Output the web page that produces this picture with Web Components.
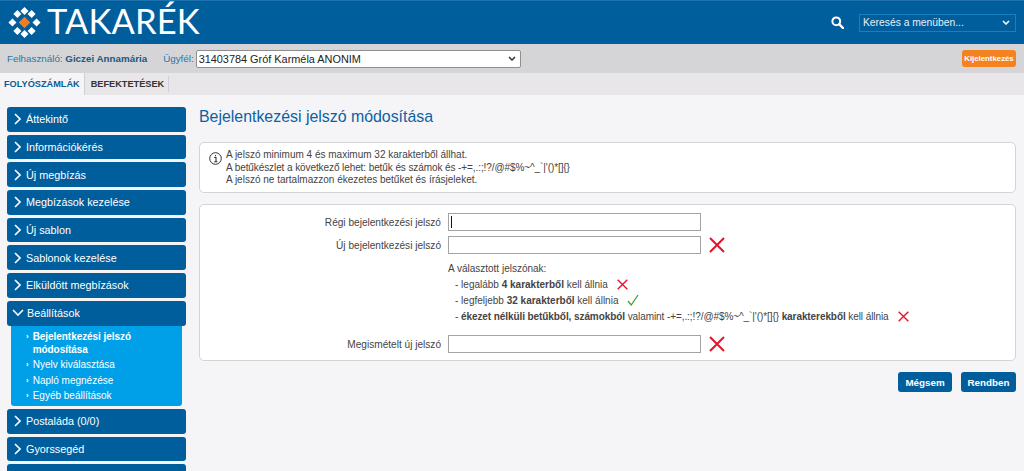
<!DOCTYPE html>
<html lang="hu">
<head>
<meta charset="utf-8">
<title>Takarék</title>
<style>
    html, body { margin: 0; height: 471px; overflow: hidden; }
    body { background: #f5f5f7; font-family: "Liberation Sans", Arial, sans-serif; font-size: 10px; color: #444; }
</style>
</head>
<body>
<tk-header></tk-header>
<tk-userbar name="Giczei Annamária" client="31403784 Gróf Karméla ANONIM"></tk-userbar>
<tk-tabs></tk-tabs>
<tk-layout>
    <tk-nav slot="nav">
        <tk-nav-item>Áttekintő</tk-nav-item>
        <tk-nav-item>Információkérés</tk-nav-item>
        <tk-nav-item>Új megbízás</tk-nav-item>
        <tk-nav-item>Megbízások kezelése</tk-nav-item>
        <tk-nav-item>Új sablon</tk-nav-item>
        <tk-nav-item>Sablonok kezelése</tk-nav-item>
        <tk-nav-item>Elküldött megbízások</tk-nav-item>
        <tk-nav-item open>
            Beállítások
            <tk-sub-item slot="sub" active>Bejelentkezési jelszó módosítása</tk-sub-item>
            <tk-sub-item slot="sub">Nyelv kiválasztása</tk-sub-item>
            <tk-sub-item slot="sub">Napló megnézése</tk-sub-item>
            <tk-sub-item slot="sub">Egyéb beállítások</tk-sub-item>
        </tk-nav-item>
        <tk-nav-item>Postaláda (0/0)</tk-nav-item>
        <tk-nav-item>Gyorssegéd</tk-nav-item>
        <tk-nav-item></tk-nav-item>
    </tk-nav>
    <tk-password-page></tk-password-page>
</tk-layout>

<script>
const ICONS = {
    cross: size => `<svg width="${size}" height="${size}" viewBox="0 0 16 16"><path d="M1 1L15 15M15 1L1 15" stroke="#e3132b" stroke-width="2" fill="none"/></svg>`,
    check: size => `<svg width="${size}" height="${size}" viewBox="0 0 12 12"><path d="M1 7L4.2 11L11 1" stroke="#3fa535" stroke-width="1.3" fill="none"/></svg>`
};

const arrow = color => `url("data:image/svg+xml,%3Csvg xmlns='http://www.w3.org/2000/svg' width='8' height='5'%3E%3Cpath d='M1 1L4 4L7 1' stroke='${color}' stroke-width='1.500' fill='none'/%3E%3C/svg%3E")`;

class TkHeader extends HTMLElement {
    constructor() {
        super();
        this.attachShadow({ mode: 'open' });
        this.shadowRoot.innerHTML = `
            <style>
                :host { display: flex; align-items: center; justify-content: space-between; height: 43px; background: #005e9c; border-top: 1px solid #1d73ad; }
                .logo { display: flex; align-items: center; gap: 6px; padding-left: 8px; }
                .word { font: 400 34.500px/39px Lato, "Liberation Sans", sans-serif; color: #fff; letter-spacing: 0.1px; margin-top: -4px; }
                .search { display: flex; align-items: center; gap: 15px; padding-right: 8px; }
                select { appearance: none; width: 157px; height: 18px; padding: 0 0 0 3px; box-sizing: border-box; background: #005e9c ${arrow('%23fff')} no-repeat right 5px center; color: #e6f1f8; border: 1px solid #1580c4; border-radius: 0; font: 10.300px "Liberation Sans", sans-serif; outline: 0; }
            </style>
            <div class="logo">
                <svg width="33" height="33" viewBox="0 0 37 37">
                    <g fill="#fff">
                        <path d="M18.5 1L23 5.5L18.5 10L14 5.5Z"/>
                        <path d="M18.5 27L23 31.5L18.5 36L14 31.5Z"/>
                        <path d="M5 14L9.500 18.500L5 23L0.500 18.500Z"/>
                        <path d="M32 14L36.500 18.500L32 23L27.500 18.500Z"/>
                        <path d="M10.500 4.500L15 9L10.500 13.500L6 9Z"/>
                        <path d="M26.500 4.500L31 9L26.500 13.500L22 9Z"/>
                        <path d="M10.500 23.500L15 28L10.500 32.500L6 28Z"/>
                        <path d="M26.500 23.500L31 28L26.500 32.500L22 28Z"/>
                    </g>
                    <path d="M18.500 12L25 18.500L18.500 25L12 18.500Z" fill="#f47c20"/>
                </svg>
                <span class="word">TAKARÉK</span>
            </div>
            <div class="search">
                <svg width="13" height="13" viewBox="0 0 13 13"><circle cx="5.300" cy="5.300" r="3.900" fill="none" stroke="#fff" stroke-width="2"/><path d="M8.300 8.300L12 12" stroke="#fff" stroke-width="2.400" stroke-linecap="round"/></svg>
                <select><option>Keresés a menüben...</option></select>
            </div>
        `;
    }
}

class TkUserbar extends HTMLElement {
    constructor() {
        super();
        this.attachShadow({ mode: 'open' });
    }

    connectedCallback() {
        this.shadowRoot.innerHTML = `
            <style>
                :host { display: flex; align-items: center; height: 29px; padding: 0 8px 0 7px; background: #d5d5d7; color: #2a75aa; font-size: 9.800px; }
                b { color: #20587f; }
                .client { margin-left: 16px; }
                select { appearance: none; width: 325px; height: 18px; margin-left: 2px; padding: 0 0 0 2px; background: #fff ${arrow('%23333')} no-repeat right 4px center; color: #222; border: 1px solid #8f8f8f; border-radius: 2px; font: 10.900px "Liberation Sans", sans-serif; }
                button { margin-left: auto; width: 54px; height: 17px; padding: 0; border: 0; border-radius: 3px; background: #f58220; color: #fff; font: 700 7.800px "Liberation Sans", sans-serif; }
            </style>
            <span>Felhasználó: <b>${this.getAttribute('name')}</b></span>
            <span class="client">Ügyfél:</span>
            <select><option>${this.getAttribute('client')}</option></select>
            <button>Kijelentkezés</button>
        `;
    }
}

class TkTabs extends HTMLElement {
    constructor() {
        super();
        this.attachShadow({ mode: 'open' });
        this.shadowRoot.innerHTML = `
            <style>
                :host { display: flex; height: 22px; background: #e8e6e9; font-size: 9.200px; font-weight: 700; line-height: 22px; }
                div { padding: 0 4px 0 5px; color: #333; border-right: 1px solid #d0d0d2; height: 16px; line-height: 16px; margin-top: 3px; }
                .active { color: #0b5c96; background: #f5f5f7; height: 22px; line-height: 22px; margin-top: 0; padding: 0 4px; margin-right: 1px; }
            </style>
            <div class="active">FOLYÓSZÁMLÁK</div>
            <div>BEFEKTETÉSEK</div>
        `;
    }
}

class TkLayout extends HTMLElement {
    constructor() {
        super();
        this.attachShadow({ mode: 'open' });
        this.shadowRoot.innerHTML = `
            <style>
                :host { display: grid; grid-template-columns: 179px 817px; column-gap: 13px; padding: 12px 8px 0 7px; }
            </style>
            <slot name="nav"></slot>
            <slot></slot>
        `;
    }
}

class TkNav extends HTMLElement {
    constructor() {
        super();
        this.attachShadow({ mode: 'open' });
        this.shadowRoot.innerHTML = `
            <style>
                :host { display: flex; flex-direction: column; gap: 3px; }
            </style>
            <slot></slot>
        `;
    }
}

class TkNavItem extends HTMLElement {
    constructor() {
        super();
        this.attachShadow({ mode: 'open' });
    }

    connectedCallback() {
        const open = this.hasAttribute('open');
        const chevron = open ? 'M1 3L6 8L11 3' : 'M2 1L7 6L2 11';
        this.shadowRoot.innerHTML = `
            <style>
                :host { display: block; }
                .head { display: flex; align-items: center; gap: ${open ? 3 : 5}px; height: 24.700px; padding-left: ${open ? 5 : 6}px; box-sizing: border-box; background: #005e9c; border-radius: 3px; color: #fff; font-size: 10.800px; }
                svg { flex: none; }
                .sub { margin: 0 4px; padding: 4px 0 4px 15px; background: #00a0e9; border-radius: 0 0 3px 3px; display: flex; flex-direction: column; gap: 2.500px; }
                .sub.none { display: none; }
            </style>
            <div class="head">
                <svg width="${open ? 12 : 8}" height="12" viewBox="0 0 ${open ? 12 : 8} 12"><path d="${chevron}" stroke="#fff" stroke-width="1.600" fill="none"/></svg>
                <span><slot></slot></span>
            </div>
            <div class="sub ${open ? '' : 'none'}"><slot name="sub"></slot></div>
        `;
    }
}

class TkSubItem extends HTMLElement {
    constructor() {
        super();
        this.attachShadow({ mode: 'open' });
        this.shadowRoot.innerHTML = `
            <style>
                :host { display: flex; gap: 4px; color: #fff; font-size: 10px; line-height: 13px; }
                :host([active]) { font-weight: 700; letter-spacing: -0.05px; }
                i { font: 700 8px/13px "Liberation Sans", sans-serif; }
            </style>
            <i>›</i><span><slot></slot></span>
        `;
    }
}

class TkField extends HTMLElement {
    constructor() {
        super();
        this.attachShadow({ mode: 'open' });
    }

    connectedCallback() {
        const focused = this.hasAttribute('focused');
        this.shadowRoot.innerHTML = `
            <style>
                :host { display: grid; grid-template-columns: 233px 253px auto; column-gap: 7px; align-items: center; }
                label { text-align: right; font-size: 10.100px; }
                input { box-sizing: border-box; width: 253px; height: 18px; margin: 0; border: 1px solid #a3a3a3; background: #fff; outline: 0; }
                .wrap { position: relative; display: flex; }
                .caret { position: absolute; left: 3px; top: 3px; width: 1px; height: 12px; background: #111; }
                .mark { display: flex; padding-left: 1px; }
            </style>
            <label>${this.getAttribute('label')}</label>
            <div class="wrap"><input type="text">${focused ? '<span class="caret"></span>' : ''}</div>
            <div class="mark">${this.hasAttribute('invalid') ? ICONS.cross(16) : ''}</div>
        `;
    }
}

class TkRule extends HTMLElement {
    constructor() {
        super();
        this.attachShadow({ mode: 'open' });
    }

    connectedCallback() {
        const icon = this.getAttribute('state') === 'ok' ? ICONS.check(12) : ICONS.cross(11);
        this.shadowRoot.innerHTML = `
            <style>
                :host { display: flex; align-items: center; gap: 9px; height: 16px; padding-left: 7px; font-size: 10px; }
                :host([tight]) { letter-spacing: -0.08px; }
                svg { display: block; }
            </style>
            <span><slot></slot></span>${icon}
        `;
    }
}

class TkPasswordPage extends HTMLElement {
    constructor() {
        super();
        this.attachShadow({ mode: 'open' });
        this.shadowRoot.innerHTML = `
            <style>
                :host { display: block; }
                h1 { margin: 0; height: 35px; font-size: 15.900px; line-height: 20px; font-weight: 400; color: #0b62a3; }
                .box { background: #fff; border: 1px solid #d4d4d4; border-radius: 5px; box-sizing: border-box; }
                .info { display: flex; gap: 4px; height: 51px; padding: 6px 9px; margin-bottom: 11px; font-size: 10px; line-height: 12.500px; }
                .info svg { flex: none; margin-top: 3px; }
                .info .tight { letter-spacing: -0.09px; }
                .form { height: 157px; padding: 8px 0 0 8px; display: flex; flex-direction: column; }
                .rules { padding: 9px 0 0 240px; font-size: 10px; }
                .rules p { margin: 0 0 2px; }
                .last { margin-top: 11px; }
                .second { margin-top: 5px; }
                .actions { display: flex; justify-content: flex-end; gap: 9px; margin-top: 11px; }
                button { height: 20px; width: 54px; padding: 0; border: 0; border-radius: 3px; background: #005e9c; color: #fff; font: 700 9.800px "Liberation Sans", sans-serif; }
                button + button { width: 55px; }
            </style>
            <h1>Bejelentkezési jelszó módosítása</h1>
            <div class="box info">
                <svg width="13" height="13" viewBox="0 0 13 13"><circle cx="6.500" cy="6.500" r="5.800" fill="none" stroke="#333" stroke-width="1"/><path d="M5.200 5.500H7V9.800M5.200 9.800H8.400M6.500 3V4.200" fill="none" stroke="#333" stroke-width="1.100"/></svg>
                <div>
                    A jelszó minimum 4 és maximum 32 karakterből állhat.<br>
                    <span class="tight">A betűkészlet a következő lehet: betűk és számok és -+=,.:;!?/@#$%~^_\`|'()*[]{}</span><br>
                    A jelszó ne tartalmazzon ékezetes betűket és írásjeleket.
                </div>
            </div>
            <div class="box form">
                <tk-field label="Régi bejelentkezési jelszó" focused></tk-field>
                <tk-field class="second" label="Új bejelentkezési jelszó" invalid></tk-field>
                <div class="rules">
                    <p>A választott jelszónak:</p>
                    <tk-rule state="bad">- legalább <b>4 karakterből</b> kell állnia</tk-rule>
                    <tk-rule state="ok">- legfeljebb <b>32 karakterből</b> kell állnia</tk-rule>
                    <tk-rule state="bad" tight>- <b>ékezet nélküli betűkből, számokból</b> valamint -+=,.:;!?/@#$%~^_\`|'()*[]{} <b>karakterekből</b> kell állnia</tk-rule>
                </div>
                <tk-field class="last" label="Megismételt új jelszó" invalid></tk-field>
            </div>
            <div class="actions">
                <button>Mégsem</button>
                <button>Rendben</button>
            </div>
        `;
    }
}

customElements.define('tk-header', TkHeader);
customElements.define('tk-userbar', TkUserbar);
customElements.define('tk-tabs', TkTabs);
customElements.define('tk-layout', TkLayout);
customElements.define('tk-nav', TkNav);
customElements.define('tk-nav-item', TkNavItem);
customElements.define('tk-sub-item', TkSubItem);
customElements.define('tk-field', TkField);
customElements.define('tk-rule', TkRule);
customElements.define('tk-password-page', TkPasswordPage);
</script>
</body>
</html>
